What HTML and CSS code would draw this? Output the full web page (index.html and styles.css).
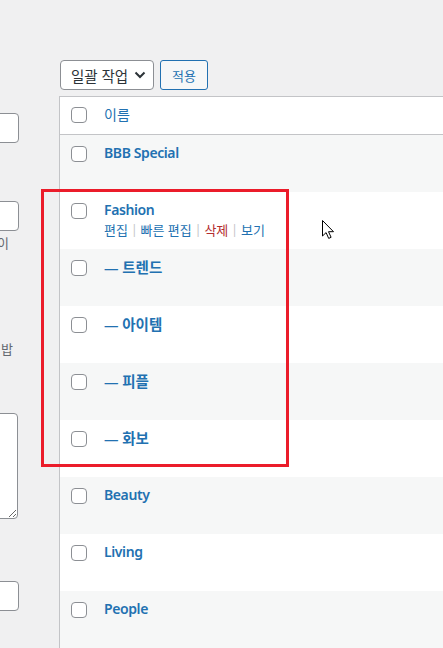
FILE: index.html
```html
<!DOCTYPE html>
<html lang="ko">
<head>
<meta charset="utf-8">
<link rel="stylesheet" href="styles.css">
</head>
<body>
<div class="page">
  <div class="form-col">
    <div class="field f1"><span class="input"></span></div>
    <div class="field f2"><span class="input"></span></div>
    <p class="help h1">이</p>
    <p class="help h2">밥</p>
    <div class="field f3"><textarea class="area"></textarea></div>
    <div class="field f4"><span class="input"></span></div>
  </div>
  <div class="list-col">
    <div class="tablenav">
      <div class="select"><span>일괄 작업</span>
        <svg class="chev" width="12" height="8" viewBox="0 0 12 8"><path d="M1.5 1.5 6 6l4.5-4.5" fill="none" stroke="#2c3338" stroke-width="2"/></svg>
      </div>
      <div class="btn">적용</div>
    </div>
    <div class="table">
      <div class="thead">
        <span class="cb"></span><span class="col-name">이름</span>
      </div>
      <div class="row alt"><span class="cb"></span><div class="cell"><span class="title en">BBB Special</span></div></div>
      <div class="row"><span class="cb"></span><div class="cell"><span class="title en">Fashion</span>
        <div class="actions"><span>편집</span><i>|</i><span>빠른 편집</span><i>|</i><span class="del">삭제</span><i>|</i><span>보기</span></div></div></div>
      <div class="row alt"><span class="cb"></span><div class="cell"><span class="title">— 트렌드</span></div></div>
      <div class="row"><span class="cb"></span><div class="cell"><span class="title">— 아이템</span></div></div>
      <div class="row alt"><span class="cb"></span><div class="cell"><span class="title">— 피플</span></div></div>
      <div class="row"><span class="cb"></span><div class="cell"><span class="title">— 화보</span></div></div>
      <div class="row alt"><span class="cb"></span><div class="cell"><span class="title en">Beauty</span></div></div>
      <div class="row"><span class="cb"></span><div class="cell"><span class="title en">Living</span></div></div>
      <div class="row alt"><span class="cb"></span><div class="cell"><span class="title en">People</span></div></div>
    </div>
  </div>
</div>
<div class="highlight"></div>
<svg class="cursor" width="14" height="20" viewBox="0 0 14 20"><path d="M0.5 0.5v15.5l3.6-3.4 2.6 5.8 2.4-1.1-2.6-5.6h5z" fill="#fff" stroke="#000" stroke-width="1" stroke-linejoin="round"/></svg>
</body>
</html>
```
FILE: styles.css
```css
html, body {
  margin: 0;
  padding: 0;
  background: #f0f0f1;
  width: 443px;
  height: 648px;
  overflow: hidden;
  font-family: "Noto Sans", "Noto Sans CJK KR", sans-serif;
  color: #3c434a;
}
.page {
  display: flex;
  height: 648px;
}
.form-col {
  width: 19px;
  flex: none;
  overflow: hidden;
  display: flex;
  flex-direction: column;
  align-items: flex-end;
  padding-top: 113px;
  box-sizing: border-box;
}
.field {
  width: 240px;
  flex: none;
  display: flex;
  justify-content: flex-end;
}
.input {
  display: block;
  width: 240px;
  height: 30px;
  box-sizing: border-box;
  border: 1px solid #8c8f94;
  border-radius: 4px;
  background: #fff;
}
.f2 { margin-top: 58px; }
.help {
  margin: 0;
  font-size: 13px;
  line-height: 20px;
  color: #646970;
  width: 240px;
  text-align: right;
  flex: none;
  padding-right: 8px;
  box-sizing: border-box;
}
.h1 { margin-top: 2px; padding-right: 10px; }
.h2 { margin-top: 86px; padding-right: 6px; }
.f3 { margin-top: 54px; width: 240px; padding-right: 1px; box-sizing: border-box; }
.area {
  display: block;
  width: 239px;
  height: 106px;
  box-sizing: border-box;
  border: 1px solid #8c8f94;
  border-radius: 4px;
  background: #fff;
  margin: 0;
  padding: 0;
}
.f4 { margin-top: 62px; }
.list-col {
  margin-left: 40px;
  flex: 1;
  min-width: 0;
  display: flex;
  flex-direction: column;
}
.tablenav {
  display: flex;
  gap: 6px;
  padding-top: 60px;
  padding-left: 1px;
  height: 97px;
  box-sizing: border-box;
}
.select {
  width: 94px;
  height: 30px;
  box-sizing: border-box;
  border: 1px solid #8c8f94;
  border-radius: 4px;
  background: #fff;
  font-size: 14.5px;
  color: #2c3338;
  display: flex;
  align-items: center;
  justify-content: space-between;
  padding-left: 10px;
  padding-right: 7px;
}
.btn {
  width: 48px;
  height: 30px;
  box-sizing: border-box;
  border: 1px solid #2271b1;
  border-radius: 3px;
  background: #f6f7f7;
  color: #2271b1;
  font-size: 13px;
  display: flex;
  align-items: center;
  justify-content: center;
}
.table {
  width: 500px;
  border-left: 1px solid #c3c4c7;
  border-top: 1px solid #c3c4c7;
  background: #fff;
}
.thead {
  height: 38px;
  box-sizing: border-box;
  border-bottom: 1px solid #c3c4c7;
  display: flex;
  align-items: flex-start;
  padding-top: 10px;
  padding-left: 11px;
  gap: 17px;
}
.cb {
  display: block;
  width: 16px;
  height: 16px;
  box-sizing: border-box;
  border: 1px solid #8c8f94;
  border-radius: 4px;
  background: #fff;
  flex: none;
}
.col-name {
  font-size: 14px;
  line-height: 16px;
  color: #2271b1;
}
.row {
  height: 57px;
  display: flex;
  align-items: flex-start;
  padding-left: 11px;
  gap: 17px;
  background: #fff;
}
.row.alt { background: #f6f7f7; }
.row .cb { margin-top: 11px; }
.cell {
  padding-top: 8px;
}
.title {
  display: block;
  font-size: 14.5px;
  line-height: 20px;
  font-weight: 600;
  color: #2271b1;
}
.title.en {
  font-size: 14px;
  letter-spacing: -0.4px;
}
.actions {
  font-size: 13px;
  line-height: 20px;
  color: #2271b1;
  display: flex;
  align-items: center;
}
.actions i {
  font-style: normal;
  color: #c3c4c7;
  padding: 0 3px;
  font-size: 12px;
}
.actions .del { color: #b32d2e; }
.highlight {
  position: absolute;
  left: 41px;
  top: 189px;
  width: 248px;
  height: 278px;
  box-sizing: border-box;
  border: 3px solid #eb1c2a;
}
.cursor {
  position: absolute;
  left: 322px;
  top: 220px;
}
```
